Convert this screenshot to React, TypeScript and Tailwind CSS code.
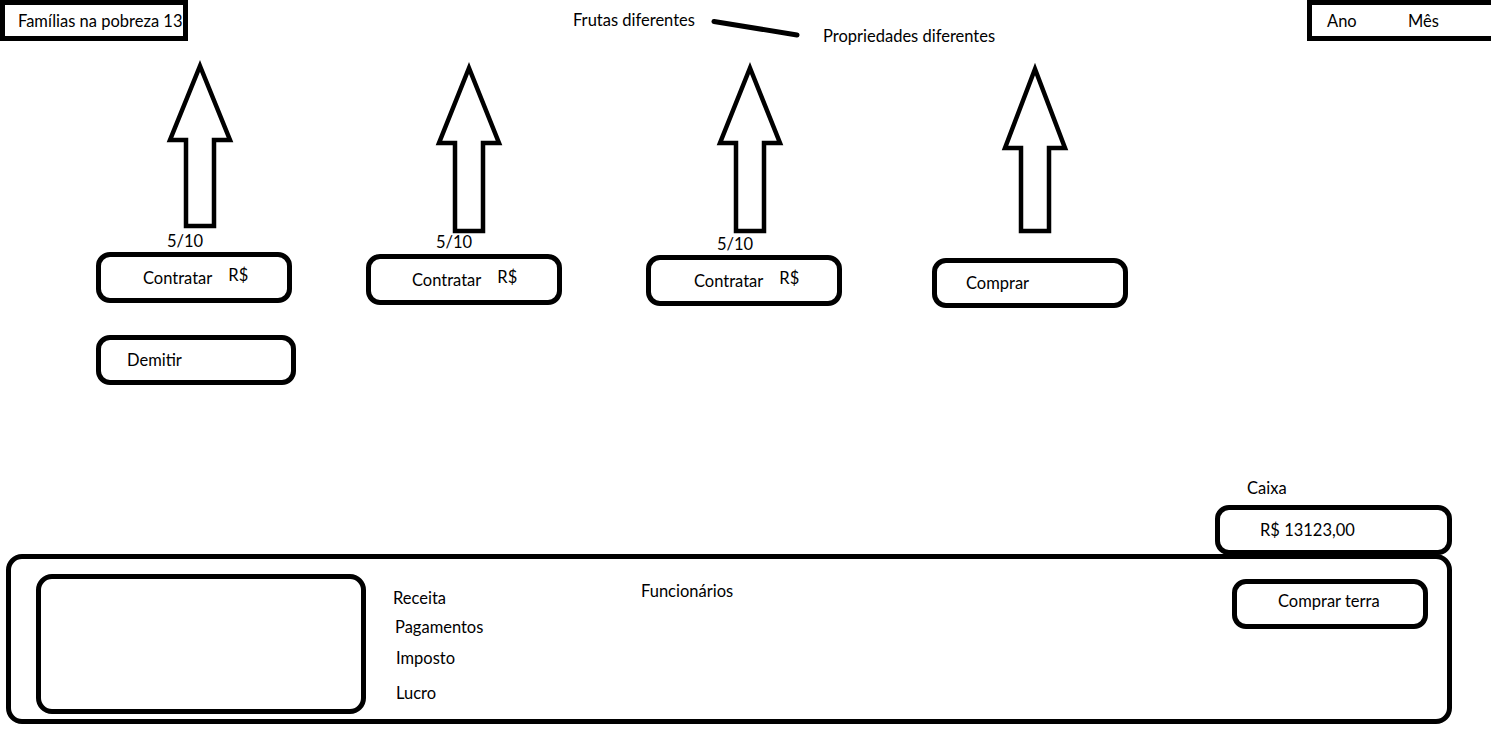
import React from 'react'

// hand-drawn style up arrow, coordinates are centerline of the stroke
function Arrow({ head, bottom, className = '' }: { head: number; bottom: number; className?: string }) {
  return (
    <svg width={70} height={bottom + 3} className={`overflow-visible ${className}`}>
      <polygon
        points={`35,7 65,${head} 49,${head} 49,${bottom} 21,${bottom} 21,${head} 5,${head}`}
        fill="white"
        stroke="black"
        strokeWidth={4.5}
        strokeLinejoin="miter"
      />
    </svg>
  )
}

function PaintButton({ className = '', children }: { className?: string; children: React.ReactNode }) {
  return (
    <div className={`flex items-center border-[5px] border-black rounded-[14px] bg-white ${className}`}>
      {children}
    </div>
  )
}

function HireColumn({
  className,
  arrowClass,
  head,
  bottom,
  countClass,
  buttonClass,
  padClass,
}: {
  className: string
  arrowClass: string
  head: number
  bottom: number
  countClass: string
  buttonClass: string
  padClass: string
}) {
  return (
    <div className={`flex flex-col w-[196px] ${className}`}>
      <Arrow head={head} bottom={bottom} className={arrowClass} />
      <div className={countClass}>5/10</div>
      <PaintButton className={`h-[51px] w-[196px] ${buttonClass}`}>
        <span className={padClass}>Contratar</span>
        <span className="ml-[16px] mb-[6px]">R$</span>
      </PaintButton>
    </div>
  )
}

export default function App() {
  return (
    <div className="w-full h-[737px] bg-white overflow-hidden text-black text-[16.5px] leading-[18px] font-[Lato,'Noto_Sans',sans-serif]">
      {/* Top bar */}
      <div className="flex items-start h-[41px]">
        <div className="flex items-center w-[188px] h-[41px] border-[5px] border-black pl-[13px] whitespace-nowrap">
          Famílias na pobreza 13
        </div>
        <div className="ml-[385px] mt-[11px] w-[138px] whitespace-nowrap">Frutas diferentes</div>
        <svg width={90} height={24} className="mt-[17px]">
          <line x1={3} y1={4.5} x2={86} y2={18} stroke="black" strokeWidth={5} strokeLinecap="round" />
        </svg>
        <div className="ml-[22px] mt-[27px] whitespace-nowrap">Propriedades diferentes</div>
        <div className="ml-auto flex items-center w-[184px] h-[41px] border-[5px] border-r-0 border-black pl-[15px]">
          <span className="w-[81px]">Ano</span>
          <span>Mês</span>
        </div>
      </div>

      {/* Arrows and actions */}
      <div className="flex items-start">
        <div className="ml-[96px] mt-[18px] flex flex-col w-[200px]">
          <HireColumn
            className=""
            arrowClass="ml-[69px]"
            head={81}
            bottom={167}
            countClass="ml-[71px] mt-[3px]"
            buttonClass="mt-[2px]"
            padClass="pl-[42px]"
          />
          <PaintButton className="mt-[32px] h-[50px] w-[200px]">
            <span className="pl-[26px]">Demitir</span>
          </PaintButton>
        </div>
        <HireColumn
          className="ml-[70px] mt-[20px]"
          arrowClass="ml-[68px]"
          head={82}
          bottom={170}
          countClass="ml-[70px] -mt-[1px]"
          buttonClass="mt-[3px]"
          padClass="pl-[41px]"
        />
        <HireColumn
          className="ml-[84px] mt-[20px]"
          arrowClass="ml-[69px]"
          head={82}
          bottom={170}
          countClass="ml-[71px] mt-[1px]"
          buttonClass="mt-[2px]"
          padClass="pl-[43px]"
        />
        <div className="ml-[90px] mt-[21px] flex flex-col w-[196px]">
          <Arrow head={86} bottom={169} className="ml-[68px]" />
          <PaintButton className="mt-[24px] h-[50px] w-[196px]">
            <span className="pl-[29px]">Comprar</span>
          </PaintButton>
        </div>
      </div>

      {/* Caixa */}
      <div className="ml-[1215px] mt-[94px] flex flex-col w-[237px]">
        <div className="pl-[32px]">Caixa</div>
        <PaintButton className="mt-[8px] h-[50px] w-[237px]">
          <span className="pl-[40px]">R$ 13123,00</span>
        </PaintButton>
      </div>

      {/* Bottom panel */}
      <div className="ml-[6px] -mt-[1px] w-[1446px] h-[170px] border-[5px] border-black rounded-[16px] flex items-start">
        <div className="ml-[25px] mt-[15px] w-[330px] h-[140px] border-[5px] border-black rounded-[16px]" />
        <div className="ml-[27px] mt-[30px] w-[248px] flex flex-col">
          <div>Receita</div>
          <div className="mt-[11px] ml-[2px]">Pagamentos</div>
          <div className="mt-[13px] ml-[3px]">Imposto</div>
          <div className="mt-[17px] ml-[3px]">Lucro</div>
        </div>
        <div className="mt-[23px]">Funcionários</div>
        <PaintButton className="ml-auto mr-[19px] mt-[20px] h-[50px] w-[196px]">
          <span className="pl-[41px] mb-[6px]">Comprar terra</span>
        </PaintButton>
      </div>
    </div>
  )
}
